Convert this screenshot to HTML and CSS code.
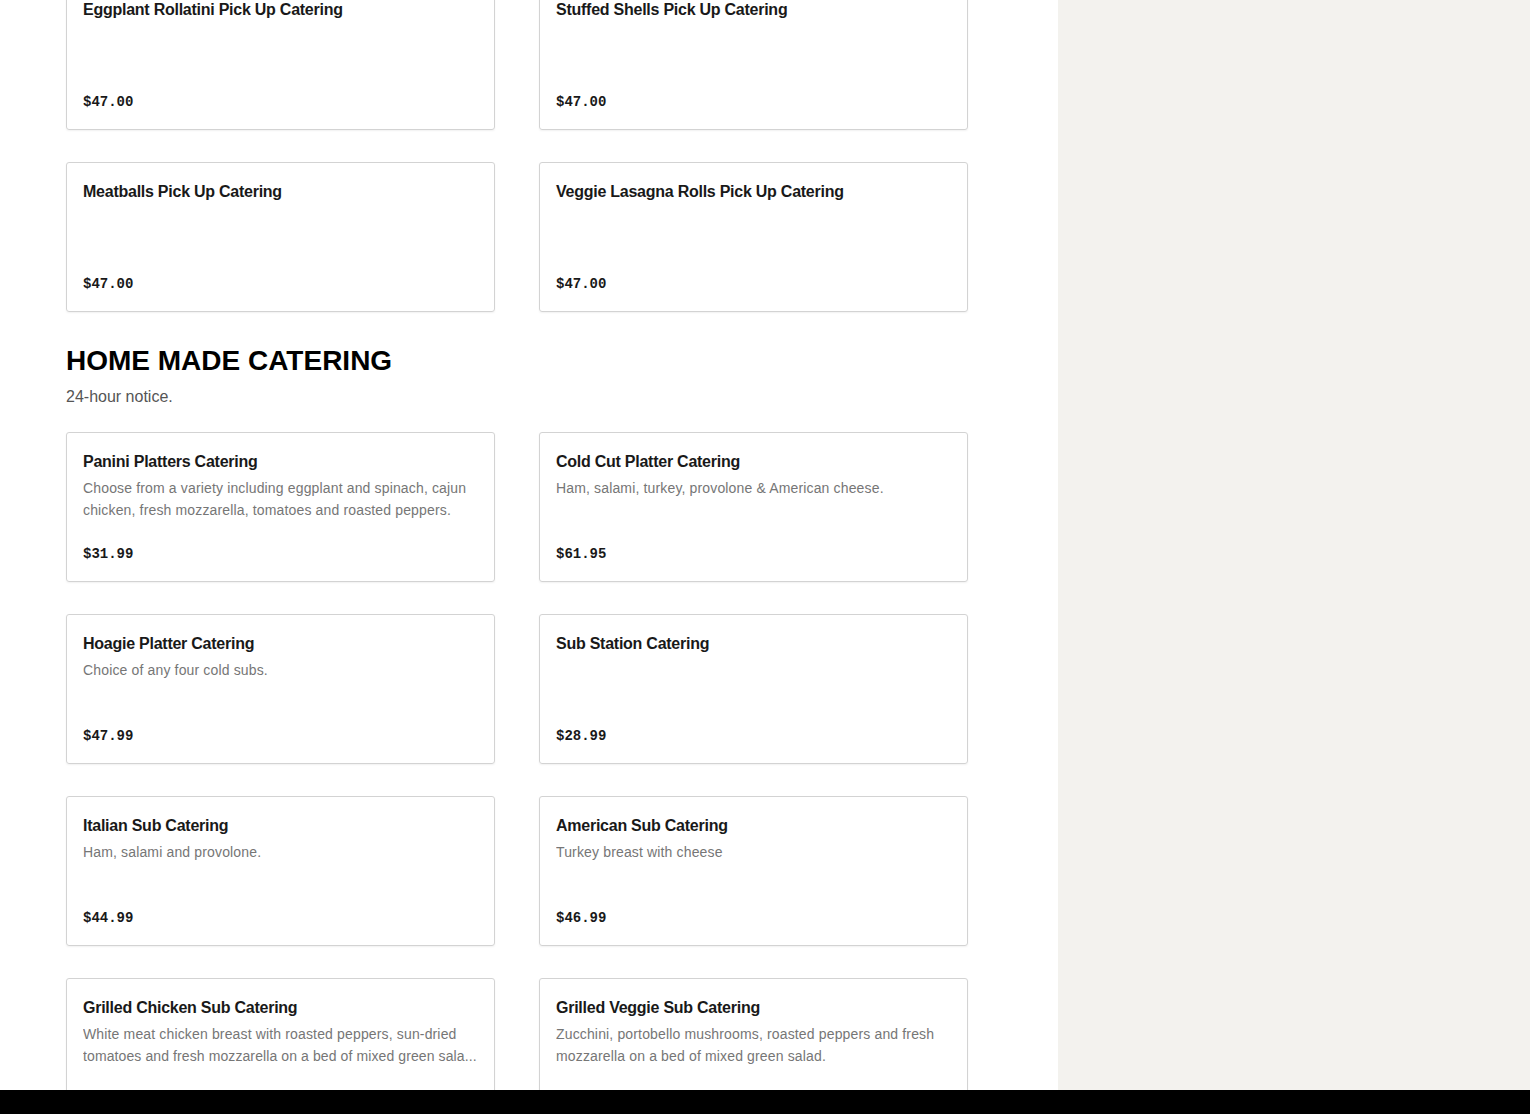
FILE: index.html
```html
<!DOCTYPE html>
<html lang="en">
<head>
    <meta charset="UTF-8">
    <meta name="viewport" content="width=device-width, initial-scale=1.0">
    <title>Catering Menu</title>
    <link rel="stylesheet" href="styles.css">
</head>
<body>
    <div class="page">
        <main class="menu">
            <section class="menu-section first">
                <div class="items">
                    <div class="item">
                        <h3>Eggplant Rollatini Pick Up Catering</h3>
                        <span class="price">$47.00</span>
                    </div>
                    <div class="item">
                        <h3>Stuffed Shells Pick Up Catering</h3>
                        <span class="price">$47.00</span>
                    </div>
                    <div class="item">
                        <h3>Meatballs Pick Up Catering</h3>
                        <span class="price">$47.00</span>
                    </div>
                    <div class="item">
                        <h3>Veggie Lasagna Rolls Pick Up Catering</h3>
                        <span class="price">$47.00</span>
                    </div>
                </div>
            </section>

            <section class="menu-section">
                <h2>Home Made Catering</h2>
                <p class="section-note">24-hour notice.</p>
                <div class="items">
                    <div class="item">
                        <h3>Panini Platters Catering</h3>
                        <p class="desc">Choose from a variety including eggplant and spinach, cajun chicken, fresh mozzarella, tomatoes and roasted peppers.</p>
                        <span class="price">$31.99</span>
                    </div>
                    <div class="item">
                        <h3>Cold Cut Platter Catering</h3>
                        <p class="desc">Ham, salami, turkey, provolone &amp; American cheese.</p>
                        <span class="price">$61.95</span>
                    </div>
                    <div class="item">
                        <h3>Hoagie Platter Catering</h3>
                        <p class="desc">Choice of any four cold subs.</p>
                        <span class="price">$47.99</span>
                    </div>
                    <div class="item">
                        <h3>Sub Station Catering</h3>
                        <span class="price">$28.99</span>
                    </div>
                    <div class="item">
                        <h3>Italian Sub Catering</h3>
                        <p class="desc">Ham, salami and provolone.</p>
                        <span class="price">$44.99</span>
                    </div>
                    <div class="item">
                        <h3>American Sub Catering</h3>
                        <p class="desc">Turkey breast with cheese</p>
                        <span class="price">$46.99</span>
                    </div>
                    <div class="item">
                        <h3>Grilled Chicken Sub Catering</h3>
                        <p class="desc">
                            <span class="line">White meat chicken breast with roasted peppers, sun-dried</span>
                            <span class="line cut">tomatoes and fresh mozzarella on a bed of mixed green sala...</span>
                        </p>
                        <span class="price">$42.99</span>
                    </div>
                    <div class="item">
                        <h3>Grilled Veggie Sub Catering</h3>
                        <p class="desc">Zucchini, portobello mushrooms, roasted peppers and fresh mozzarella on a bed of mixed green salad.</p>
                        <span class="price">$42.99</span>
                    </div>
                </div>
            </section>
        </main>
        <aside class="side"></aside>
    </div>
    <div class="bottom-bar"></div>
</body>
</html>
```

FILE: styles.css
```css
body {
    margin: 0;
    padding: 0;
    font-family: "Liberation Sans", Arial, sans-serif;
    color: #191919;
    background-color: #fff;
    overflow: hidden;
}

.page {
    display: flex;
    min-height: 100vh;
}

.menu {
    width: 1058px;
    flex-shrink: 0;
    padding: 0 0 0 66px;
    box-sizing: border-box;
}

.side {
    flex: 1;
    background-color: #f3f2ee;
}

.menu-section {
    margin-top: 32px;
}

.menu-section.first {
    margin-top: -20px;
}

h2 {
    margin: 0;
    font-size: 28px;
    line-height: 34px;
    font-weight: 900;
    text-transform: uppercase;
    color: #000;
}

.section-note {
    margin: 7px 0 23px;
    font-size: 16px;
    line-height: 24px;
    color: #555;
}

.items {
    display: grid;
    grid-template-columns: 429px 429px;
    column-gap: 44px;
    row-gap: 32px;
}

.item {
    display: flex;
    flex-direction: column;
    height: 150px;
    box-sizing: border-box;
    padding: 17px 16px 15px;
    border: 1px solid #d3d3d3;
    border-radius: 3px;
    box-shadow: 0 1px 2px rgba(0, 0, 0, 0.06);
}

.item h3 {
    margin: 0;
    font-size: 16px;
    line-height: 24px;
    font-weight: 600;
    letter-spacing: -0.25px;
    color: #191919;
}

.desc {
    margin: 3px 0 0;
    font-size: 14px;
    line-height: 22px;
    letter-spacing: 0.15px;
    color: #767676;
    display: -webkit-box;
    -webkit-line-clamp: 2;
    -webkit-box-orient: vertical;
    overflow: hidden;
}

.desc .line {
    display: block;
}

.desc .cut {
    white-space: nowrap;
    letter-spacing: 0.1px;
}

.price {
    margin-top: auto;
    font-family: "Liberation Mono", "Courier New", monospace;
    font-size: 14px;
    line-height: 24px;
    font-weight: 700;
    color: #191919;
}

.bottom-bar {
    position: fixed;
    left: 0;
    right: 0;
    bottom: 0;
    height: 24px;
    background-color: #000;
}
```
